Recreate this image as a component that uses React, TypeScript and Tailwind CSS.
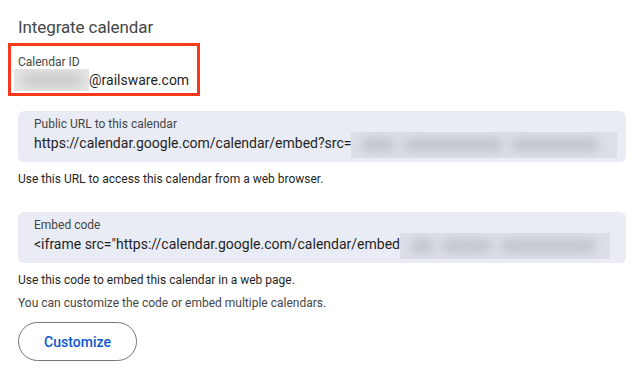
const font = { fontFamily: "Roboto, 'Noto Sans', sans-serif" };

function Smudge({ width, widths }: { width: number; widths: number[] }) {
  // blurred-out text, drawn as soft grey patches
  return (
    <div
      className="flex h-[26px] shrink-0 items-center gap-[8px] overflow-hidden bg-[#dcdfe7] px-[10px]"
      style={{ width }}
    >
      {widths.map((w, i) => (
        <span
          key={i}
          className="block h-[14px] shrink-0 rounded-full bg-[#c3c6ce] blur-[5px]"
          style={{ width: w }}
        />
      ))}
    </div>
  );
}

function CodeBox({
  label,
  value,
  blurWidth,
  smudges,
}: {
  label: string;
  value: string;
  blurWidth: number;
  smudges: number[];
}) {
  return (
    <div className="w-[608px] rounded-[6px] bg-[#e9ecf5] pb-[8px] pl-[16px] pt-[5px]">
      <div className="text-[12px] leading-[16px] text-[#444746]">{label}</div>
      <div className="flex h-[22px] items-start">
        <span className="whitespace-nowrap text-[14px] leading-[22px] text-[#1f1f1f]">{value}</span>
        <Smudge width={blurWidth} widths={smudges} />
      </div>
    </div>
  );
}

export default function App() {
  return (
    <div className="h-[376px] w-[644px] overflow-hidden bg-white pl-[18px] pt-[15px]" style={font}>
      <h2 className="text-[17px] leading-[24px] tracking-[-0.1px] text-[#444746]">Integrate calendar</h2>

      {/* highlighted field */}
      <div className="-ml-[10px] mt-[4px] w-[192px] border-[3px] border-[#f5391c] pb-[3px] pl-[7px] pt-[8px]">
        <div className="text-[12px] leading-[16px] text-[#444746]">Calendar ID</div>
        <div className="flex h-[20px] items-center">
          <div className="-ml-[4px] flex h-[22px] w-[75px] shrink-0 items-center overflow-hidden bg-[#e4e4e4]">
            <span className="ml-[8px] block h-[14px] w-[60px] rounded-full bg-[#cdcdcd] blur-[5px]" />
          </div>
          <span className="whitespace-nowrap text-[14px] leading-[20px] text-[#1f1f1f]">@railsware.com</span>
        </div>
      </div>

      <div className="mt-[15px]">
        <CodeBox
          label="Public URL to this calendar"
          value="https://calendar.google.com/calendar/embed?src="
          blurWidth={266}
          smudges={[34, 100, 88]}
        />
      </div>
      <p className="mt-[9px] text-[12px] leading-[16px] text-[#1f1f1f]">
        Use this URL to access this calendar from a web browser.
      </p>

      <div className="mt-[25px]">
        <CodeBox
          label="Embed code"
          value={'<iframe src="https://calendar.google.com/calendar/embed'}
          blurWidth={210}
          smudges={[24, 50, 96]}
        />
      </div>
      <p className="mt-[9px] text-[12px] leading-[16px] text-[#1f1f1f]">
        Use this code to embed this calendar in a web page.
      </p>
      <p className="mt-[7px] text-[12px] leading-[16px] text-[#444746]">
        You can customize the code or embed multiple calendars.
      </p>

      <button className="mt-[11px] flex h-[39px] w-[119px] items-center justify-center rounded-full border border-[#747775] text-[14px] font-medium leading-[20px] text-[#0b57d0]">
        Customize
      </button>
    </div>
  );
}
